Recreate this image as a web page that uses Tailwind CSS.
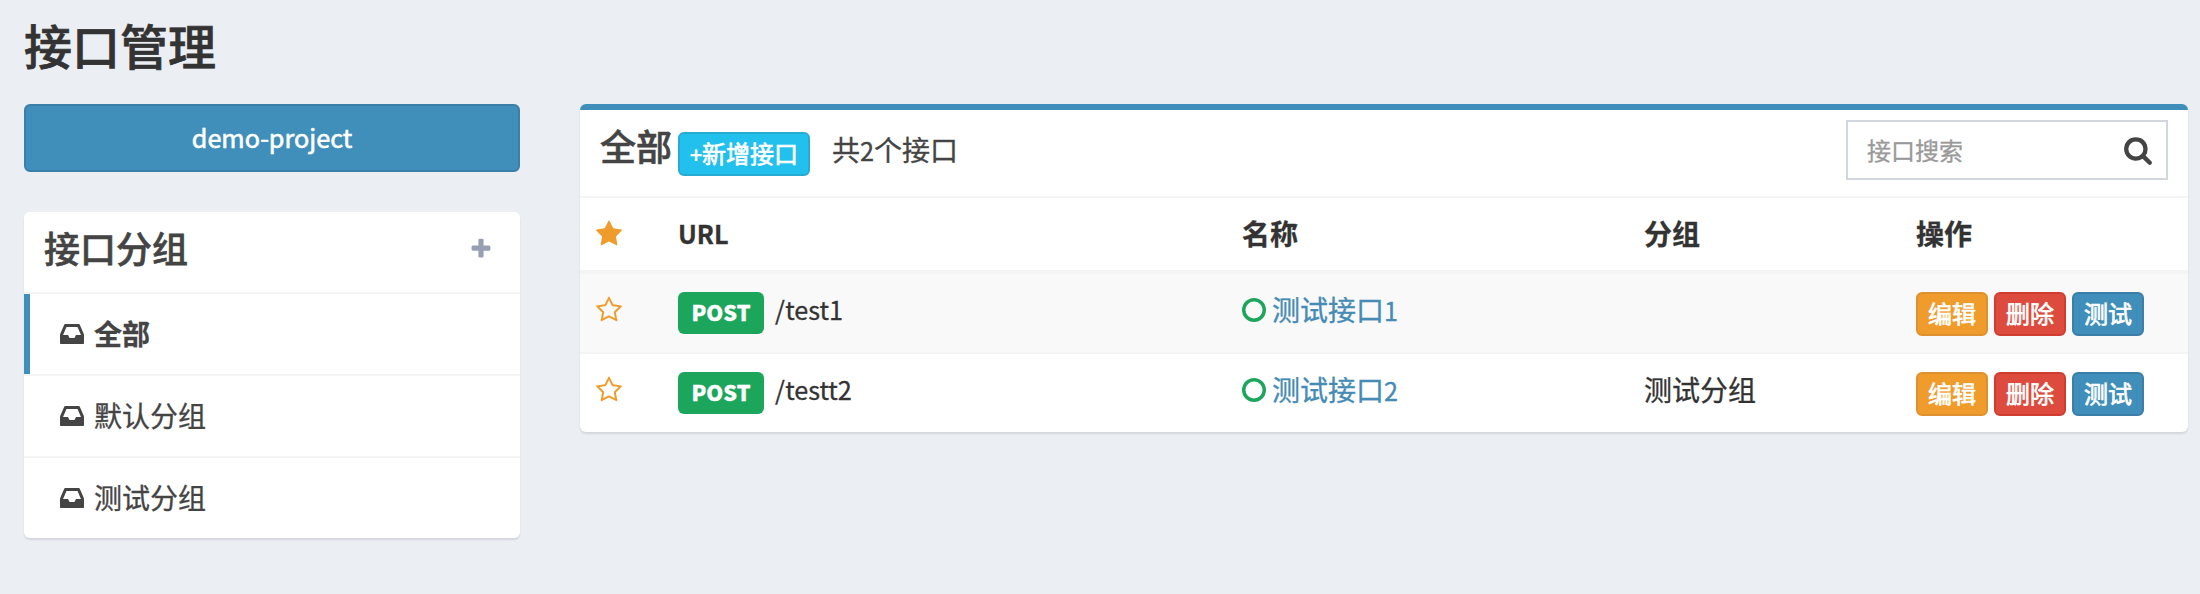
<!DOCTYPE html>
<html lang="zh-CN">
<head>
<meta charset="utf-8">
<title>接口管理</title>
<script src="https://cdn.jsdelivr.net/npm/@tailwindcss/browser@4"></script>
</head>
<body class="h-[594px] w-[2200px] overflow-hidden bg-[#ebeff4] font-['Noto_Sans_CJK_SC',sans-serif] text-[28px] leading-10 text-[#333] [-webkit-text-stroke:0.3px]">
<svg class="hidden">
  <symbol id="star" viewBox="0 0 1792 1792"><path d="M1728 647q0 22-26 48l-363 354 86 500q1 7 1 20 0 21-10.5 35.5t-30.5 14.5q-19 0-40-12l-449-236-449 236q-22 12-40 12-21 0-31.5-14.5t-10.5-35.5q0-6 2-20l86-500-364-354q-25-27-25-48 0-37 56-46l502-73 225-455q19-41 49-41t49 41l225 455 502 73q56 9 56 46z"/></symbol>
  <symbol id="star-o" viewBox="0 0 1792 1792"><path d="M1201 1004l306-297-422-62-189-382-189 382-422 62 306 297-73 421 378-199 377 199zm527-357q0 22-26 48l-363 354 86 500q1 7 1 20 0 50-41 50-19 0-40-12l-449-236-449 236q-22 12-40 12-21 0-31.5-14.5t-10.5-35.5q0-6 2-20l86-500-364-354q-25-27-25-48 0-37 56-46l502-73 225-455q19-41 49-41t49 41l225 455 502 73q56 9 56 46z"/></symbol>
  <symbol id="plus" viewBox="0 0 1792 1792"><path d="M1600 736v192q0 40-28 68t-68 28h-416v416q0 40-28 68t-68 28h-192q-40 0-68-28t-28-68v-416h-416q-40 0-68-28t-28-68v-192q0-40 28-68t68-28h416v-416q0-40 28-68t68-28h192q40 0 68 28t28 68v416h416q40 0 68 28t28 68z"/></symbol>
  <symbol id="inbox" viewBox="128 128 1536 1536"><path d="M1151 960h316q-1-3-2.5-8t-2.5-8l-212-496h-708l-212 496q-1 2-2.5 8t-2.5 8h316l95 192h320zm513 30v482q0 26-19 45t-45 19h-1408q-26 0-45-19t-19-45v-482q0-62 25-123l238-552q10-25 36.5-42t52.5-17h832q26 0 52.5 17t36.5 42l238 552q25 61 25 123z"/></symbol>
  <symbol id="search" viewBox="0 0 1792 1792"><path d="M1216 832q0-185-131.5-316.5t-316.5-131.5-316.5 131.5-131.5 316.5 131.5 316.5 316.5 131.5 316.5-131.5 131.5-316.5zm512 832q0 52-38 90t-90 38q-54 0-90-38l-343-342q-179 124-399 124-143 0-273.5-55.5t-225-150-150-225-55.5-273.5 55.5-273.5 150-225 225-150 273.5-55.5 273.5 55.5 225 150 150 225 55.5 273.5q0 220-124 399l343 343q37 37 37 90z"/></symbol>
  <symbol id="ring" viewBox="0 0 24 24"><circle cx="12" cy="12" r="10.25" fill="none" stroke="currentColor" stroke-width="3.5"/></symbol>
</svg>

<h1 class="h-[104px] pt-4 pl-6 text-[48px] leading-14 font-medium [-webkit-text-stroke:0.7px]">接口管理</h1>

<div class="flex items-start gap-[60px] pr-3 pl-6">
  <aside class="w-[496px]">
    <button class="flex h-[68px] w-full items-center justify-center rounded-md border-2 border-[#3b7fa8] bg-[#408fbb] pb-0.5 text-[25.2px] text-white [-webkit-text-stroke:0.6px]">demo-project</button>
    <section class="mt-10 overflow-hidden rounded-md bg-white text-[#444] shadow-[0_2px_2px_rgba(0,0,0,0.1)]">
      <header class="flex h-[82px] items-center justify-between border-b-2 border-[#f4f4f4] pr-[27px] pb-1.5 pl-5">
        <h2 class="pb-1 text-[36px] font-medium [-webkit-text-stroke:0.6px]">接口分组</h2>
        <svg class="size-6 fill-[#97a0b3]"><use href="#plus"/></svg>
      </header>
      <ul>
        <li class="flex h-20 items-center gap-2.5 border-l-6 border-[#408fbb] pl-[30px] font-bold"><svg class="size-6 fill-[#444]"><use href="#inbox"/></svg><span class="pb-[3px]">全部</span></li>
        <li class="flex h-[82px] items-center gap-2.5 border-t-2 border-[#f4f4f4] pl-9"><svg class="size-6 fill-[#444]"><use href="#inbox"/></svg><span class="pb-[3px]">默认分组</span></li>
        <li class="flex h-[82px] items-center gap-2.5 border-t-2 border-[#f4f4f4] pl-9"><svg class="size-6 fill-[#444]"><use href="#inbox"/></svg><span class="pb-[3px]">测试分组</span></li>
      </ul>
    </section>
  </aside>

  <main class="w-[1608px] overflow-hidden rounded-md border-t-6 border-[#408fbb] bg-white shadow-[0_2px_2px_rgba(0,0,0,0.1)]">
    <header class="flex h-[88px] items-start border-b-2 border-[#f4f4f4] pl-5 text-[#444]">
      <h2 class="mt-[15px] w-[78px] text-[36px] font-medium [-webkit-text-stroke:0.6px]">全部</h2>
      <button class="mt-[22px] flex h-11 w-[132px] items-center justify-center rounded-md border-2 border-[#27abd3] bg-[#22c0ed] pb-[3px] text-[24px] whitespace-nowrap text-white [-webkit-text-stroke:0.7px]"><span><span class="text-[21.6px] leading-none">+</span>新增接口</span></button>
      <span class="mt-[19px] ml-[22px]">共<span class="text-[25.2px] leading-none">2</span>个接口</span>
      <div class="mt-2.5 mr-5 ml-auto flex h-[60px] w-[322px] items-center justify-between border-2 border-[#d2d6de] pr-[13px] pl-[19px]">
        <span class="text-[24px] text-[#999]">接口搜索</span>
        <svg class="size-[30px] fill-[#444]"><use href="#search"/></svg>
      </div>
    </header>
    <div class="grid h-[72px] grid-cols-[83px_564px_402px_272px_1fr] items-start pt-[15px] pl-[15px] font-bold">
      <svg class="mt-[7px] size-7 fill-[#f09c2c]"><use href="#star"/></svg>
      <span class="-mt-px"><span class="text-[25.2px] leading-none">URL</span></span><span>名称</span><span>分组</span><span>操作</span>
    </div>
    <div class="grid h-[82px] grid-cols-[83px_564px_402px_272px_1fr] items-start border-t-4 border-[#f4f4f4] bg-[#f9f9f9] pt-[15px] pl-[15px]">
      <svg class="mt-[7px] size-7 fill-[#f09c2c]"><use href="#star-o"/></svg>
      <div class="flex gap-[11px]"><span class="mt-[3px] flex h-[42px] w-[86px] items-center justify-center rounded-md bg-[#1ca65c] pb-[3px] text-[21.6px] font-black text-white">POST</span><span class="-mt-px"><span class="text-[25.2px] leading-none">/test1</span></span></div>
      <div class="flex gap-1.5 text-[#458bb5]"><svg class="mt-[9px] size-6 text-[#1ca65c]"><use href="#ring"/></svg><span>测试接口<span class="text-[25.2px] leading-none">1</span></span></div>
      <span></span>
      <div class="mt-[3px] flex gap-1.5 text-[24px] text-white [-webkit-text-stroke:0.7px]">
        <button class="flex h-11 w-[72px] items-center justify-center rounded-md border-2 border-[#dd9130] bg-[#f09c2c] pb-[3px]">编辑</button>
        <button class="flex h-11 w-[72px] items-center justify-center rounded-md border-2 border-[#d13c30] bg-[#dc4b3d] pb-[3px]">删除</button>
        <button class="flex h-11 w-[72px] items-center justify-center rounded-md border-2 border-[#3b7fa8] bg-[#408fbb] pb-[3px]">测试</button>
      </div>
    </div>
    <div class="grid h-20 grid-cols-[83px_564px_402px_272px_1fr] items-start border-t-2 border-[#f4f4f4] pt-[15px] pl-[15px]">
      <svg class="mt-[7px] size-7 fill-[#f09c2c]"><use href="#star-o"/></svg>
      <div class="flex gap-[11px]"><span class="mt-[3px] flex h-[42px] w-[86px] items-center justify-center rounded-md bg-[#1ca65c] pb-[3px] text-[21.6px] font-black text-white">POST</span><span class="-mt-px"><span class="text-[25.2px] leading-none">/testt2</span></span></div>
      <div class="flex gap-1.5 text-[#458bb5]"><svg class="mt-[9px] size-6 text-[#1ca65c]"><use href="#ring"/></svg><span>测试接口<span class="text-[25.2px] leading-none">2</span></span></div>
      <span>测试分组</span>
      <div class="mt-[3px] flex gap-1.5 text-[24px] text-white [-webkit-text-stroke:0.7px]">
        <button class="flex h-11 w-[72px] items-center justify-center rounded-md border-2 border-[#dd9130] bg-[#f09c2c] pb-[3px]">编辑</button>
        <button class="flex h-11 w-[72px] items-center justify-center rounded-md border-2 border-[#d13c30] bg-[#dc4b3d] pb-[3px]">删除</button>
        <button class="flex h-11 w-[72px] items-center justify-center rounded-md border-2 border-[#3b7fa8] bg-[#408fbb] pb-[3px]">测试</button>
      </div>
    </div>
  </main>
</div>
</body>
</html>
